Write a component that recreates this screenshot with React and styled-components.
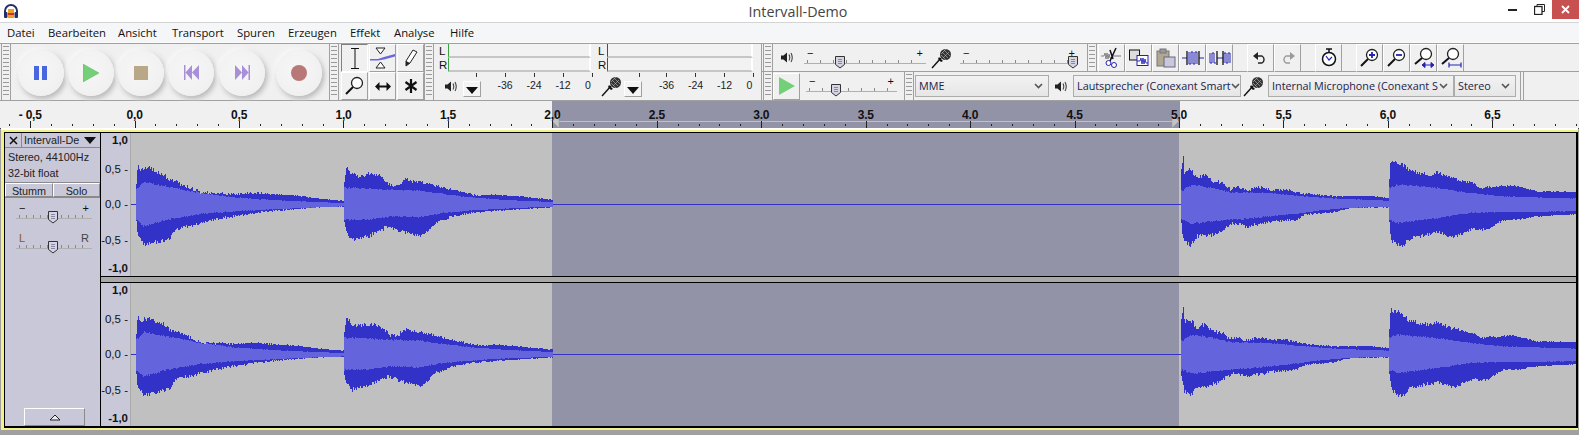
import React from 'react';
import styled, { createGlobalStyle } from 'styled-components';

const uiFont = '"Open Sans", "Noto Sans", sans-serif';
const smallFont = '"Liberation Sans", Arial, sans-serif';
const selectionBg = '#9393a8';
const panelBg = '#c8c8d8';
const lineGray = '#a0a0a0';

const GlobalStyle = createGlobalStyle`
  html, body { margin: 0; padding: 0; background: #a0a0a0; }
  * { box-sizing: border-box; }
  svg { flex: none; }
`;

const Window = styled.div`
  width: 1579px;
  height: 435px;
  overflow: hidden;
  display: flex;
  flex-direction: column;
  background: #f0f0f0;
  font-family: ${smallFont};
  color: #000;
`;

/* title bar */
const TitleBar = styled.header`
  height: 23px;
  flex: none;
  display: flex;
  align-items: flex-start;
  padding-left: 3px;
  background: #fff;
  border-bottom: 1px solid #d4d4d4;
`;
const AppIcon = styled.div`
  width: 16px;
  flex: none;
  padding-top: 4px;
`;
const Title = styled.div`
  flex: 1;
  text-align: center;
  font: 14.3px/23px ${uiFont};
  color: #444;
  padding-left: 78px;
`;
const WinBtn = styled.div`
  width: ${p => p.$w}px;
  height: 19px;
  flex: none;
  display: flex;
  align-items: center;
  justify-content: center;
  background: ${p => p.$bg || 'transparent'};
`;

/* menu */
const MenuBar = styled.nav`
  height: 20px;
  flex: none;
  display: flex;
  align-items: center;
  padding-left: 7px;
  background: #f5f6f7;
  border-bottom: 1px solid #fbfbfb;
  font: 11.3px/18px ${uiFont};
  color: #111;
`;
const MenuItem = styled.span`
  width: ${p => p.$w}px;
  flex: none;
`;

/* toolbars */
const Dock = styled.div`
  height: 58px;
  flex: none;
  display: flex;
  background: #f0f0f0;
  border-top: 1px solid ${lineGray};
  border-bottom: 1px solid ${lineGray};
`;
const Grip = styled.div`
  width: 10px;
  flex: none;
  margin-left: ${p => p.$ml || 0}px;
  border: 1px solid ${lineGray};
  border-width: 0 1px;
  background:
    repeating-linear-gradient(to bottom, #9a9a9a 0, #9a9a9a 1px, #f0f0f0 1px, #f0f0f0 4px)
    center 2px / 6px calc(100% - 4px) no-repeat;
`;
const Transport = styled.div`
  width: 318px;
  flex: none;
  display: flex;
  align-items: center;
  padding-left: 7px;
`;
const RoundBtn = styled.div`
  width: 46px;
  height: 46px;
  flex: none;
  margin-left: ${p => p.$ml}px;
  margin-top: 1px;
  border-radius: 50%;
  display: flex;
  align-items: center;
  justify-content: center;
  background: radial-gradient(circle at 44% 42%, #f6f6f6 0, #f2f2f2 55%, #ececec 100%);
  box-shadow: 2px 3px 5px #bcbcbc, -2px -2px 4px #fbfbfb, 1px 1px 7px #dcdcdc;
`;
const ToolGrid = styled.div`
  width: 85px;
  flex: none;
  display: grid;
  grid-template-columns: repeat(3, 28px);
  grid-template-rows: 28px 28px;
  padding-left: 2px;
`;
const IconBtn = styled.div`
  width: 27px;
  height: ${p => p.$h || 28}px;
  flex: none;
  display: flex;
  align-items: center;
  justify-content: center;
  background: #f0f0f0;
  border: 1px solid;
  border-color: ${p => (p.$down ? '#808080 #fff #fff #808080' : '#fff #a0a0a0 #a0a0a0 #fff')};
`;
const MeterWrap = styled.div`
  width: 325px;
  flex: none;
  display: grid;
  grid-template-columns: 159px 166px;
  grid-template-rows: 28px 28px;
  padding-left: 1px;
`;
const MeterRows = styled.div`
  display: flex;
  flex-direction: column;
`;
const MeterRow = styled.div`
  height: 14px;
  display: flex;
  font: 11.5px/14px ${smallFont};
  padding-left: 4px;
`;
const MeterLabel = styled.span`
  width: 9px;
  color: #111;
`;
const MeterBox = styled.div`
  width: ${p => p.$w}px;
  background: #f2f2f2;
  border-left: 1px solid ${p => p.$edge};
  border-right: 2px solid #fff;
  border-bottom: 2px solid #c6c6c6;
`;
const ScaleRow = styled.div`
  display: flex;
  align-items: center;
  padding-left: ${p => p.$pl}px;
`;
const DropBtn = styled.div`
  width: 18px;
  height: 16px;
  margin: 5px 0 0 ${p => p.$ml}px;
  flex: none;
  display: flex;
  align-items: center;
  justify-content: center;
  padding-top: 3px;
  background: #f4f4f4;
  border: 1px solid;
  border-color: #fff #a0a0a0 #a0a0a0 #fff;
`;
const ScaleMark = styled.div`
  width: ${p => p.$w || 29}px;
  flex: none;
  height: 28px;
  padding-top: 6px;
  text-align: center;
  font: 10.5px/14px ${smallFont};
  color: #222;
  position: relative;
  &::before {
    content: '';
    position: absolute;
    left: ${p => p.$tick ?? 14}px;
    top: 1px;
    width: 1px;
    height: 4px;
    background: #333;
  }
`;
const RightDock = styled.div`
  flex: 1;
  display: flex;
  flex-direction: column;
  margin-left: 2px;
  border-left: 1px solid ${lineGray};
`;
const DockRow = styled.div`
  height: 28px;
  display: flex;
  align-items: center;
  padding-left: 1px;
  border-bottom: ${p => (p.$line ? `1px solid ${lineGray}` : 'none')};
`;
const DockGrip = styled(Grip)`
  height: 100%;
`;
const DockSep = styled.div`
  width: 4px;
  height: 100%;
  flex: none;
  margin-left: 4px;
  border: 1px solid ${lineGray};
  border-width: 0 1px;
`;
const GapBox = styled.div`
  width: ${p => p.$w}px;
  flex: none;
`;
const Slider = styled.div`
  width: ${p => p.$w}px;
  height: 18px;
  flex: none;
  margin-bottom: 6px;
  position: relative;
  font: 11px/10px ${smallFont};
  color: #222;
  border-bottom: 1px solid #b0b0b0;
  background:
    repeating-linear-gradient(to right, #8a8a8a 0, #8a8a8a 1px, transparent 1px, transparent ${p => p.$tick}px)
    3px bottom / calc(100% - 6px) 3px no-repeat;
`;
const SliderEnd = styled.span`
  position: absolute;
  top: ${p => p.$top || 2}px;
  ${p => (p.$right ? 'right: 3px;' : 'left: 3px;')}
  color: ${p => p.$color || '#111'};
`;
const Thumb = styled.svg`
  position: absolute;
  left: ${p => p.$left}px;
  bottom: -6px;
`;
const Select = styled.div`
  width: ${p => p.$w}px;
  height: 22px;
  flex: none;
  margin-left: ${p => p.$ml || 0}px;
  display: flex;
  align-items: center;
  justify-content: space-between;
  padding: 0 5px 0 3px;
  background: linear-gradient(#f2f2f2, #e6e6e6);
  border: 1px solid #acacac;
  font: 10.8px/18px ${uiFont};
  color: #1c1c4a;
  white-space: nowrap;
`;
const SelectText = styled.span`
  flex: 1;
`;

/* ruler */
const Ruler = styled.div`
  height: 27px;
  flex: none;
  position: relative;
  overflow: hidden;
  background: #f0f0f0;
`;
const RulerLabels = styled.div`
  position: relative;
  z-index: 1;
  display: flex;
  margin-left: -22px;
  padding-top: 6px;
`;
const RulerLabel = styled.span`
  flex: none;
  width: 104.45px;
  text-align: center;
  font: bold 12px/16px ${smallFont};
  color: #111;
  letter-spacing: -0.2px;
`;
const RulerSelection = styled.div`
  position: absolute;
  left: 552px;
  top: 0;
  width: 628px;
  height: 100%;
  background: ${selectionBg};
  &::after {
    content: '';
    position: absolute;
    left: 0;
    right: 0;
    top: 20px;
    height: 1px;
    background: #c0c0c8;
  }
`;
const TickSvg = styled.svg`
  position: absolute;
  left: ${p => p.$left || 0}px;
  bottom: 0;
  z-index: 1;
`;

/* tracks */
const TrackArea = styled.div`
  flex: 1;
  padding: 1px 1px 0 1px;
  background: #a0a0a0;
  border-top: 1px solid #444;
`;
const TrackFrame = styled.div`
  height: 300px;
  background: #f4f08a;
  border: 2px solid #f4f08a;
  border-left-width: 3px;
  border-right: none;
  box-shadow: 0 -2px 0 #fff;
`;
const TrackBox = styled.div`
  height: 100%;
  display: flex;
  border: 1px solid #000;
  border-width: 1px 2px 2px 1px;
  background: ${panelBg};
`;
const Panel = styled.aside`
  width: 95px;
  flex: none;
  display: flex;
  flex-direction: column;
  font: 10.8px/16px ${smallFont};
  color: #222;
  background: ${panelBg};
`;
const PanelTitle = styled.div`
  height: 15px;
  display: flex;
  border-bottom: 1px solid #8a8a8a;
`;
const CloseBox = styled.div`
  width: 17px;
  flex: none;
  display: flex;
  align-items: center;
  justify-content: center;
  border-right: 1px solid #8a8a8a;
`;
const TitleBox = styled.div`
  flex: 1;
  display: flex;
  align-items: center;
  justify-content: space-between;
  padding: 0 4px 0 2px;
`;
const Info = styled.div`
  padding: 1px 0 0 3px;
  height: 35px;
  border-bottom: 1px solid #8a8a8a;
`;
const MuteRow = styled.div`
  display: flex;
  height: 15px;
  border-bottom: 1px solid #8a8a8a;
`;
const MuteBtn = styled.div`
  flex: ${p => p.$f};
  text-align: center;
  line-height: 14px;
  border: 1px solid;
  border-color: #fff #8a8a8a #8a8a8a #fff;
`;
const PanelSlider = styled.div`
  padding: ${p => p.$pt}px 0 0 11px;
`;
const Collapse = styled.div`
  width: 61px;
  height: 18px;
  margin: auto 0 0 19px;
  display: flex;
  align-items: center;
  justify-content: center;
  border: 1px solid;
  border-color: #fff #8a8a8a #8a8a8a #fff;
`;
const Channels = styled.div`
  flex: 1;
  display: flex;
  flex-direction: column;
  border-left: 1px solid #000;
`;
const Channel = styled.div`
  height: 143px;
  flex: none;
  display: flex;
`;
const ChannelGap = styled.div`
  height: 7px;
  flex: none;
  background: #a8a8a8;
  border-top: 1px solid #000;
  border-bottom: 1px solid #000;
`;
const VRuler = styled.div`
  width: 30px;
  flex: none;
  display: flex;
  flex-direction: column;
  align-items: flex-end;
  background: ${panelBg};
  border-right: 1px solid #aaa;
  padding-right: 2px;
`;
const VLabel = styled.span`
  margin-top: ${p => p.$gap}px;
  font: ${p => (p.$bold ? 'bold' : '400')} 11.5px/14px ${smallFont};
  color: #111;
  white-space: nowrap;
`;
const Surface = styled.div`
  flex: 1;
  position: relative;
  background: #c0c0c0;
  overflow: hidden;
`;
const SurfaceSelection = styled.div`
  position: absolute;
  left: 421px;
  top: 0;
  width: 627px;
  bottom: 0;
  background: ${selectionBg};
`;
const WaveSvg = styled.svg`
  position: absolute;
  left: 0;
  top: 0;
`;

/* wave data: x and y as read off the reference at 3x */
const segA = {
  base: 0, x0: 408, x1: 1031,
  top: [[408,185],[413,110],[418,140],[440,130],[460,135],[490,150],[510,165],[560,185],[600,203],[700,208],[760,205],[880,212],[960,222],[1031,228]],
  bot: [[408,290],[411,330],[432,360],[480,350],[510,340],[530,310],[570,305],[640,285],[700,275],[780,262],[860,255],[960,248],[1031,246]],
  ltop: [[408,195],[430,172],[500,185],[600,205],[700,218],[800,225],[900,230],[1031,235]],
  lbot: [[408,285],[430,305],[500,285],[600,268],[700,260],[800,255],[900,250],[1031,245]],
};
const segB = {
  base: 335, x0: 27, x1: 650,
  top: [[27,180],[33,128],[50,150],[75,155],[100,148],[130,152],[165,180],[185,182],[210,165],[235,170],[270,175],[300,183],[350,195],[420,212],[480,210],[550,215],[650,225]],
  bot: [[27,295],[30,315],[50,345],[100,335],[125,320],[160,305],[205,322],[255,335],[275,320],[300,295],[350,275],[430,262],[520,256],[620,250],[650,248]],
  ltop: [[27,190],[60,190],[150,195],[250,197],[300,205],[400,217],[500,225],[650,232]],
  lbot: [[27,285],[100,285],[170,275],[250,278],[320,265],[400,258],[500,252],[650,246]],
};
const segC = {
  base: 1170, x0: 33, x1: 654,
  top: [[33,140],[39,97],[42,140],[60,135],[80,160],[100,150],[130,170],[160,175],[180,195],[205,187],[230,197],[265,187],[300,197],[345,195],[400,207],[500,215],[600,214],[654,220]],
  bot: [[33,300],[40,345],[60,365],[80,335],[110,335],[150,322],[185,295],[230,305],[300,292],[380,285],[400,270],[490,262],[540,250],[654,248]],
  ltop: [[33,200],[65,180],[130,190],[180,203],[300,205],[400,215],[500,222],[654,228]],
  lbot: [[33,285],[65,297],[150,288],[250,280],[350,270],[450,257],[530,250],[654,246]],
};
const segD = {
  base: 1170, x0: 656, x1: 1221,
  top: [[656,185],[661,105],[690,115],[720,140],[780,150],[800,142],[840,160],[900,172],[930,190],[1030,182],[1100,200],[1221,202]],
  bot: [[656,290],[664,350],[695,365],[720,340],[800,322],[850,338],[900,315],[950,315],[1000,285],[1040,285],[1100,275],[1221,268]],
  ltop: [[656,190],[680,180],[800,190],[900,205],[1000,215],[1221,222]],
  lbot: [[656,285],[680,295],[800,280],[900,265],[1000,262],[1221,260]],
};

function interp(points, x) {
  for (let i = 1; i < points.length; i++) {
    if (x <= points[i][0]) {
      const [x0, y0] = points[i - 1];
      const [x1, y1] = points[i];
      return y0 + ((y1 - y0) * (x - x0)) / (x1 - x0);
    }
  }
  return points[points.length - 1][1];
}

function bandPath(seg, upper, lower, center, seed, jitter) {
  let s = seed;
  const rnd = () => {
    s = (s * 16807) % 2147483647;
    return s / 2147483647 - 0.5;
  };
  const startX = Math.round(seg.base + seg.x0 / 3) - 131;
  const endX = Math.round(seg.base + seg.x1 / 3) - 131;
  const tops = [];
  const bots = [];
  for (let x = startX; x <= endX; x++) {
    const z = (x + 131 - seg.base) * 3;
    const fade = Math.max(0.15, 1 - (x - startX) / (endX - startX));
    tops.push(Math.round(center + (interp(seg[upper], z) - 238) / 3 + rnd() * jitter * fade));
    bots.push(Math.round(center + (interp(seg[lower], z) - 238) / 3 + rnd() * jitter * fade));
  }
  let d = `M${startX} ${tops[0]}`;
  tops.forEach((y, i) => { d += `V${y}H${startX + i + 1}`; });
  for (let i = bots.length - 1; i >= 0; i--) d += `V${bots[i]}H${startX + i}`;
  return d + 'Z';
}

function Wave({ center, seed }) {
  const segs = [segA, segB, segC, segD];
  return (
    <WaveSvg width="1446" height="143" shapeRendering="crispEdges">
      <rect x="0" y={center} width="1446" height="1" fill="#3232c8" />
      {segs.map((seg, i) => (
        <React.Fragment key={i}>
          <path d={bandPath(seg, 'top', 'bot', center, seed + i * 37, 5)} fill="#3232c8" />
          <path d={bandPath(seg, 'ltop', 'lbot', center, seed + i * 91, 2)} fill="#6464dc" />
        </React.Fragment>
      ))}
    </WaveSvg>
  );
}

/* icons */
const Headphones = () => (
  <svg width="16" height="15" viewBox="0 0 16 15">
    <path d="M2 11V7a6 6 0 0 1 12 0v4" fill="none" stroke="#20306a" strokeWidth="2" />
    <rect x="1" y="8" width="3.5" height="6" rx="1" fill="#20306a" />
    <rect x="11.5" y="8" width="3.5" height="6" rx="1" fill="#20306a" />
    <rect x="5" y="5" width="6" height="9" fill="#f0a020" />
    <rect x="5" y="9" width="6" height="2" fill="#d03020" />
  </svg>
);
const Speaker = () => (
  <svg width="13" height="13" viewBox="0 0 13 13">
    <path d="M0 4.5h2.5L6 1.5v10l-3.5-3H0z" fill="#222" />
    <path d="M8 3.5q1.5 3 0 6M10 2q2.5 4.500 0 9" fill="none" stroke="#444" strokeWidth="1.1" />
  </svg>
);
const Mic = () => (
  <svg width="22" height="22" viewBox="0 0 22 22">
    <path d="M1 21L10 11" stroke="#111" strokeWidth="1.4" />
    <path d="M8 10l4 4 -2 1 -3 -3z" fill="#111" />
    <circle cx="14.500" cy="7.500" r="5.500" fill="#333" />
    <path d="M11 5l6 6M13 3l6 6M10 8l5 5M12 11l6-6M10 7l5-5" stroke="#bbb" strokeWidth="0.6" />
  </svg>
);
const DownArrow = () => (
  <svg width="12" height="7" viewBox="0 0 12 7"><path d="M0 0h12L6 7z" fill="#111" /></svg>
);
const Chevron = () => (
  <svg width="9" height="6" viewBox="0 0 9 6"><path d="M1 1l3.500 3.500L8 1" fill="none" stroke="#555" strokeWidth="1.6" /></svg>
);
const SliderThumb = ({ left }) => (
  <Thumb $left={left} width="12" height="14" viewBox="0 0 12 14">
    <path d="M1.500 1.500h9v8L6 13 1.500 9.500z" fill="#d4d4e2" stroke="#333" strokeWidth="1" />
    <path d="M4 4.500h4M4 6.500h4M4 8.500h4" stroke="#8888a8" strokeWidth="1" />
  </Thumb>
);
const Magnifier = ({ children, small }) => (
  <svg width="22" height="22" viewBox="0 0 22 22">
    <circle cx="13" cy={small ? 7 : 8} r="5.500" fill="#fff" stroke="#222" strokeWidth="1.3" />
    <path d={small ? 'M9 11L2 17' : 'M9 12L2 19'} stroke="#111" strokeWidth="2" />
    {children}
  </svg>
);
const WavePattern = ({ color = '#222' }) => (
  <path d="M0 8h3l1-3 1 6 1-6 1 6 1-5 1 4h2" fill="none" stroke={color} strokeWidth="0.9" />
);

const rulerLabels = ['- 0,5', '0,0', '0,5', '1,0', '1,5', '2,0', '2.5', '3.0', '3.5', '4.0', '4.5', '5,0', '5,5', '6,0', '6,5'];

function RulerTicks() {
  const ticks = [];
  for (let i = 0; i < 76; i++) {
    const x = Math.round(134.5 - 104.45 + (i - 1) * 20.89);
    const major = (i - 1) % 5 === 0;
    ticks.push(<rect key={i} x={x} y={major ? 20 : 23} width="1" height={major ? 7 : 2} fill="#222" />);
  }
  return <TickSvg width="1579" height="27" shapeRendering="crispEdges">{ticks}</TickSvg>;
}

const RulerTriangle = ({ x, flip }) => (
  <TickSvg $left={x} width="8" height="14" viewBox="0 0 8 14">
    <path d={flip ? 'M0 0l7 7-7 7z' : 'M7 0L0 7l7 7z'} fill="#c4c4c4" stroke="#999" strokeWidth="0.5" />
  </TickSvg>
);

const menuItems = [['Datei', 41], ['Bearbeiten', 70], ['Ansicht', 54], ['Transport', 65], ['Spuren', 51], ['Erzeugen', 62], ['Effekt', 44], ['Analyse', 56], ['Hilfe', 40]];

function ChannelRow({ center, seed, gaps }) {
  return (
    <Channel>
      <VRuler>
        {['1,0', '0,5', '0,0', '-0,5', '-1,0'].map((t, i) => (
          <VLabel key={t} $gap={gaps[i]} $bold={i === 0 || i === 4}>{t}{i > 0 && i < 4 ? ' -' : ''}</VLabel>
        ))}
      </VRuler>
      <Surface>
        <SurfaceSelection />
        <Wave center={center} seed={seed} />
      </Surface>
    </Channel>
  );
}

export default function App() {
  return (
    <Window>
      <GlobalStyle />
      <TitleBar>
        <AppIcon><Headphones /></AppIcon>
        <Title>Intervall-Demo</Title>
        <WinBtn $w={27}>
          <svg width="9" height="3"><rect width="9" height="2" y="1" fill="#222" /></svg>
        </WinBtn>
        <WinBtn $w={26}>
          <svg width="11" height="11" viewBox="0 0 11 11" fill="none" stroke="#222">
            <path d="M3 2.500V.5h7.500v7H8" />
            <rect x=".5" y="2.500" width="7.500" height="8" strokeWidth="1.300" />
          </svg>
        </WinBtn>
        <WinBtn $w={27} $bg="#c75050">
          <svg width="9" height="9"><path d="M1 1l7 7M8 1l-7 7" stroke="#fff" strokeWidth="1.800" /></svg>
        </WinBtn>
      </TitleBar>

      <MenuBar>
        {menuItems.map(([label, w]) => <MenuItem key={label} $w={w}>{label}</MenuItem>)}
      </MenuBar>

      <Dock>
        <Grip $ml={1} />
        <Transport>
          <RoundBtn $ml={0}>
            <svg width="14" height="14"><rect width="5" height="14" fill="#4a66de" /><rect x="8" width="5" height="14" fill="#4a66de" /></svg>
          </RoundBtn>
          <RoundBtn $ml={4}>
            <svg width="16" height="18"><path d="M0 0l16 9L0 18z" fill="#74d078" stroke="#5ab860" strokeWidth=".5" /></svg>
          </RoundBtn>
          <RoundBtn $ml={4}>
            <svg width="14" height="14"><rect width="14" height="14" fill="#b8a888" /></svg>
          </RoundBtn>
          <RoundBtn $ml={4}>
            <svg width="15" height="15"><path d="M0 0h1.500v15H0zM8 0v15L1.500 7.500zM15 0v15L8 7.500z" fill="#a890d8" /></svg>
          </RoundBtn>
          <RoundBtn $ml={5}>
            <svg width="15" height="15"><path d="M15 0h-1.500v15H15zM7 0v15l6.500-7.500zM0 0v15l7-7.500z" fill="#a890d8" /></svg>
          </RoundBtn>
          <RoundBtn $ml={11}>
            <svg width="16" height="16"><circle cx="8" cy="8" r="8" fill="#b87878" /></svg>
          </RoundBtn>
        </Transport>
        <Grip />
        <ToolGrid>
          <IconBtn $down>
            <svg width="10" height="21"><path d="M1 .5h8M1 20.500h8M5 .5v20" stroke="#111" /></svg>
          </IconBtn>
          <IconBtn>
            <svg width="25" height="22" viewBox="0 0 25 22">
              <path d="M6 1h9l-4.500 6zM6 21h9l-4.500-6z" fill="#fff" stroke="#222" />
              <path d="M0 12h8l6-2 11-3v2.500l-11 3-6 1H0z" fill="#6868dc" />
            </svg>
          </IconBtn>
          <IconBtn>
            <svg width="14" height="18" viewBox="0 0 14 18"><path d="M9 1l4 2-7 11-4 3 0-5z" fill="#fff" stroke="#222" /><path d="M2 17l0-5 4 2z" fill="#222" /></svg>
          </IconBtn>
          <IconBtn><Magnifier /></IconBtn>
          <IconBtn>
            <svg width="16" height="9"><path d="M3 4.500h10" stroke="#111" strokeWidth="2" /><path d="M0 4.500L4.500 0v9zM16 4.500L11.500 0v9z" fill="#111" /></svg>
          </IconBtn>
          <IconBtn>
            <svg width="14" height="14"><path d="M7 0v14M1.500 3l11 8M12.500 3l-11 8" stroke="#111" strokeWidth="2.200" /></svg>
          </IconBtn>
        </ToolGrid>
        <Grip />
        <MeterWrap>
          <MeterRows>
            <MeterRow><MeterLabel>L</MeterLabel><MeterBox $w={143} $edge="#40a040" /></MeterRow>
            <MeterRow><MeterLabel>R</MeterLabel><MeterBox $w={143} $edge="#40a040" /></MeterRow>
          </MeterRows>
          <MeterRows>
            <MeterRow><MeterLabel>L</MeterLabel><MeterBox $w={146} $edge="#903030" /></MeterRow>
            <MeterRow><MeterLabel>R</MeterLabel><MeterBox $w={146} $edge="#903030" /></MeterRow>
          </MeterRows>
          <ScaleRow $pl={10}>
            <Speaker />
            <DropBtn $ml={5}><DownArrow /></DropBtn>
            <ScaleMark $w={9.5} $tick={-5} />
            <ScaleMark>-36</ScaleMark>
            <ScaleMark>-24</ScaleMark>
            <ScaleMark>-12</ScaleMark>
            <ScaleMark $w={21}>0</ScaleMark>
          </ScaleRow>
          <ScaleRow $pl={7}>
            <Mic />
            <DropBtn $ml={1}><DownArrow /></DropBtn>
            <ScaleMark $w={10} $tick={-3} />
            <ScaleMark>-36</ScaleMark>
            <ScaleMark>-24</ScaleMark>
            <ScaleMark>-12</ScaleMark>
            <ScaleMark $w={21}>0</ScaleMark>
          </ScaleRow>
        </MeterWrap>
        <RightDock>
          <DockRow $line>
            <DockGrip />
            <GapBox $w={8} />
            <Speaker />
            <GapBox $w={10} />
            <Slider $w={122} $tick={13}>
              <SliderEnd>−</SliderEnd>
              <SliderEnd $right>+</SliderEnd>
              <SliderThumb left={30} />
            </Slider>
            <GapBox $w={5} />
            <Mic />
            <GapBox $w={7} />
            <Slider $w={118} $tick={13}>
              <SliderEnd>−</SliderEnd>
              <SliderEnd $right>+</SliderEnd>
              <SliderThumb left={107} />
            </Slider>
            <GapBox $w={9} />
            <DockGrip />
            <GapBox $w={1} />
            <IconBtn>
              <svg width="22" height="22" viewBox="0 0 22 22"><g transform="translate(0 1)"><WavePattern color="#777" /><path d="M12 8h8" stroke="#777" /></g><path d="M15 1L9 14M9 3l3 9" stroke="#111" strokeWidth="1.500" /><circle cx="7.500" cy="16" r="2.500" fill="#fff" stroke="#2222b8" /><circle cx="13" cy="18" r="2.500" fill="#fff" stroke="#2222b8" /></svg>
            </IconBtn>
            <IconBtn>
              <svg width="20" height="18" viewBox="0 0 20 18"><rect x=".5" y="1" width="10" height="10" fill="#ddd" stroke="#111" /><rect x="8" y="6.500" width="11" height="10" fill="#fff" stroke="#2222b8" /><g transform="translate(8 4)"><WavePattern color="#2222b8" /></g></svg>
            </IconBtn>
            <IconBtn>
              <svg width="20" height="20" viewBox="0 0 20 20"><rect x="1" y="3" width="12" height="15" fill="#b0a890" stroke="#777" /><rect x="4" y="1" width="6" height="4" fill="#999" stroke="#777" /><rect x="8" y="9" width="11" height="10" fill="#c8c8d8" stroke="#666688" /></svg>
            </IconBtn>
            <IconBtn>
              <svg width="22" height="18" viewBox="0 0 22 18"><path d="M0 9h5M17 9h5" stroke="#2222b8" /><path d="M5 2v14M17 2v14" stroke="#111" strokeWidth="1.300" /><path d="M7 3v12h2V3h2v12h2V3h2v12" fill="none" stroke="#2222b8" /></svg>
            </IconBtn>
            <IconBtn>
              <svg width="22" height="18" viewBox="0 0 22 18"><path d="M8 9h6" stroke="#2222b8" /><path d="M8 2v14M14 2v14" stroke="#111" strokeWidth="1.300" /><path d="M1 4v10h2V4h2v10h2M15 14V4h2v10h2V4h2v10" fill="none" stroke="#2222b8" /></svg>
            </IconBtn>
            <GapBox $w={14} />
            <IconBtn>
              <svg width="15" height="12" viewBox="0 0 15 12"><path d="M4 4h5a4 4 0 0 1 0 7H5" fill="none" stroke="#222" strokeWidth="1.400" /><path d="M0 4l5-4v8z" fill="#222" /></svg>
            </IconBtn>
            <IconBtn>
              <svg width="15" height="12" viewBox="0 0 15 12"><path d="M11 4H6a4 4 0 0 0 0 7h4" fill="none" stroke="#999" strokeWidth="1.400" /><path d="M15 4l-5-4v8z" fill="#999" /></svg>
            </IconBtn>
            <GapBox $w={14} />
            <IconBtn>
              <svg width="16" height="19" viewBox="0 0 16 19"><circle cx="8" cy="11" r="6.500" fill="#fff" stroke="#111" strokeWidth="1.500" /><path d="M5 1h6M8 1v3" stroke="#111" strokeWidth="1.500" /><path d="M5 8l3 4 3-3" fill="none" stroke="#2222b8" strokeWidth="1.200" /></svg>
            </IconBtn>
            <GapBox $w={14} />
            <IconBtn><Magnifier><path d="M10 8h6M13 5v6" stroke="#2222b8" strokeWidth="1.800" /></Magnifier></IconBtn>
            <IconBtn><Magnifier><path d="M10 8h6" stroke="#2222b8" strokeWidth="1.800" /></Magnifier></IconBtn>
            <IconBtn><Magnifier small><path d="M10 18h10M9 18l3-2.500v5zM21 18l-3-2.500v5z" fill="#2222b8" stroke="#2222b8" /></Magnifier></IconBtn>
            <IconBtn><Magnifier small><path d="M9 18h12M9 15.500v5M21 15.500v5" stroke="#2222b8" strokeWidth="1.200" /></Magnifier></IconBtn>
          </DockRow>
          <DockRow>
            <DockGrip />
            <IconBtn $h={27}>
              <svg width="16" height="18"><path d="M0 0l16 9L0 18z" fill="#74d078" /></svg>
            </IconBtn>
            <GapBox $w={6} />
            <Slider $w={91} $tick={13}>
              <SliderEnd>−</SliderEnd>
              <SliderEnd $right>+</SliderEnd>
              <SliderThumb left={24} />
            </Slider>
            <GapBox $w={7} />
            <DockGrip />
            <GapBox $w={1} />
            <Select $w={134}><SelectText>MME</SelectText><Chevron /></Select>
            <GapBox $w={6} />
            <Speaker />
            <Select $w={168} $ml={5}><SelectText>Lautsprecher (Conexant Smart</SelectText><Chevron /></Select>
            <GapBox $w={2} />
            <Mic />
            <Select $w={186} $ml={3}><SelectText>Internal Microphone (Conexant S</SelectText><Chevron /></Select>
            <Select $w={62}><SelectText>Stereo</SelectText><Chevron /></Select>
            <DockSep />
          </DockRow>
        </RightDock>
      </Dock>

      <Ruler>
        <RulerSelection />
        <RulerTriangle x={552} />
        <RulerTriangle x={1172} flip />
        <RulerLabels>
          {rulerLabels.map(t => <RulerLabel key={t}>{t}</RulerLabel>)}
        </RulerLabels>
        <RulerTicks />
      </Ruler>

      <TrackArea>
        <TrackFrame>
          <TrackBox>
            <Panel>
              <PanelTitle>
                <CloseBox>
                  <svg width="9" height="9"><path d="M1 1l7 7M8 1l-7 7" stroke="#111" strokeWidth="1.500" /></svg>
                </CloseBox>
                <TitleBox>Intervall-De<DownArrow /></TitleBox>
              </PanelTitle>
              <Info>Stereo, 44100Hz<br />32-bit float</Info>
              <MuteRow>
                <MuteBtn $f={48}>Stumm</MuteBtn>
                <MuteBtn $f={47}>Solo</MuteBtn>
              </MuteRow>
              <PanelSlider $pt={3}>
                <Slider $w={76} $tick={7}>
                  <SliderEnd>−</SliderEnd>
                  <SliderEnd $right>+</SliderEnd>
                  <SliderThumb left={31} />
                </Slider>
              </PanelSlider>
              <PanelSlider $pt={6}>
                <Slider $w={76} $tick={7}>
                  <SliderEnd $color="#8a5a20">L</SliderEnd>
                  <SliderEnd $right $color="#444">R</SliderEnd>
                  <SliderThumb left={31} />
                </Slider>
              </PanelSlider>
              <Collapse>
                <svg width="12" height="7"><path d="M6 1l5 5H1z" fill="#eee" stroke="#222" /></svg>
              </Collapse>
            </Panel>
            <Channels>
              <ChannelRow center={71} seed={11} gaps={[0, 15, 21, 22, 14]} />
              <ChannelGap />
              <ChannelRow center={71} seed={4242} gaps={[0, 15, 21, 22, 14]} />
            </Channels>
          </TrackBox>
        </TrackFrame>
      </TrackArea>
    </Window>
  );
}
